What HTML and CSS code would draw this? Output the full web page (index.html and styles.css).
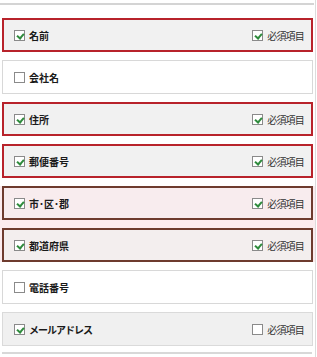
FILE: index.html
```html
<!DOCTYPE html>
<html lang="ja">
<head>
<meta charset="utf-8">
<link rel="stylesheet" href="styles.css">
</head>
<body>
<div class="frame">
  <div class="topline"></div>
  <div class="list">
    <div class="row req">
      <span class="field"><span class="cb on"></span>名前</span>
      <span class="must"><span class="cb on"></span>必須項目</span>
    </div>
    <div class="row plain">
      <span class="field"><span class="cb"></span>会社名</span>
    </div>
    <div class="row req">
      <span class="field"><span class="cb on"></span>住所</span>
      <span class="must"><span class="cb on"></span>必須項目</span>
    </div>
    <div class="row req">
      <span class="field"><span class="cb on"></span>郵便番号</span>
      <span class="must"><span class="cb on"></span>必須項目</span>
    </div>
    <div class="group">
      <div class="row req brown pinkbg">
        <span class="field"><span class="cb on"></span>市･区･郡</span>
        <span class="must"><span class="cb on"></span>必須項目</span>
      </div>
      <div class="row req brown">
        <span class="field"><span class="cb on"></span>都道府県</span>
        <span class="must"><span class="cb on"></span>必須項目</span>
      </div>
    </div>
    <div class="row plain">
      <span class="field"><span class="cb"></span>電話番号</span>
    </div>
    <div class="row grey">
      <span class="field"><span class="cb on"></span><span class="kana">メールアドレス</span></span>
      <span class="must"><span class="cb"></span>必須項目</span>
    </div>
  </div>
  <div class="bottomline"></div>
</div>
</body>
</html>
```
FILE: styles.css
```css
* { box-sizing: border-box; }
html, body { margin: 0; padding: 0; background: #fff; }
body {
  font-family: "Noto Sans CJK JP", "Noto Sans", sans-serif;
  font-size: 10px;
  color: #222;
}
.frame {
  width: 316px;
  height: 357px;
  border-right: 1px solid #dcdcdc;
  padding-top: 3px;
}
.topline {
  height: 2px;
  background: #d4d4d4;
  margin-right: 1px;
}
.list {
  display: flex;
  flex-direction: column;
  gap: 8px;
  padding: 13px 2px 0 2px;
}
.group {
  display: flex;
  flex-direction: column;
  gap: 8px;
  background: #fcecef;
  margin: 0 -2px;
  padding: 0 2px;
}
.row {
  height: 34px;
  display: flex;
  align-items: center;
  justify-content: space-between;
  padding: 0 8px 0 11px;
  border: 1px solid #d8d8d8;
  background: #fff;
}
.row.req {
  border: 2px solid #b8232b;
  background: #f1f1f1;
  padding: 0 7px 0 10px;
}
.row.brown {
  border-color: #6e3b2e;
  background: #f3eeee;
}
.row.brown.pinkbg { background: #f8ecee; }
.row.grey { background: #f0f0f0; border-color: #dadada; }
.field {
  display: flex;
  align-items: center;
  gap: 4px;
  font-weight: bold;
  font-size: 10px;
  color: #1a1a1a;
}
.kana { letter-spacing: -1px; }
.must {
  display: flex;
  align-items: center;
  gap: 4px;
  font-size: 10px;
  color: #333;
  letter-spacing: -0.8px;
}
.cb {
  width: 11px;
  height: 11px;
  border: 1px solid #8a8a8a;
  background: #fff;
  position: relative;
  flex: none;
}
.cb.on::after {
  content: "";
  position: absolute;
  left: 3px;
  top: 1px;
  width: 3px;
  height: 5px;
  border: solid #2e8b3c;
  border-width: 0 2px 2px 0;
  transform: rotate(40deg);
}
.bottomline {
  height: 2px;
  background: #d8d8d8;
  margin: 6px 3px 0 2px;
}
```
